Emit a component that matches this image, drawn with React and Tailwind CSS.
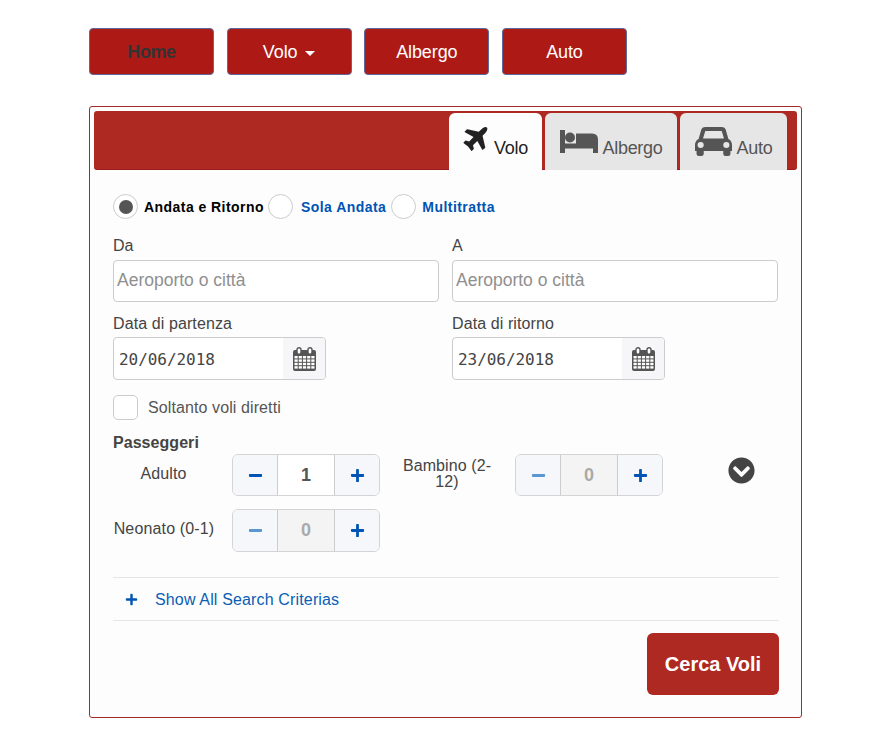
import React from "react";
import { FaChevronCircleDown, FaPlus, FaMinus } from "react-icons/fa";

function PlaneIcon() {
  return (
    <svg width="25" height="26" viewBox="0 130 1408 1530" className="mr-[6px] mb-[5px] text-[#222222]" fill="currentColor">
      <path d="M1376 160q44 52 12 148t-108 172l-161 161 160 696q5 19-12 33l-128 96q-7 6-19 6-4 0-7-1-15-3-21-16l-279-508-259 259 53 194q5 17-8 31l-96 96q-9 9-23 9h-2q-15-2-24-13l-189-252-252-189q-11-7-13-23-1-13 9-25l96-97q9-9 23-9 6 0 8 1l194 53 259-259-508-279q-14-8-17-24-2-16 9-27l128-128q14-13 30-8l665 159 160-160q76-76 172-108t148 12z" />
    </svg>
  );
}

function BedIcon() {
  return (
    <svg width="38" height="23" viewBox="0 0 38 23" className="mr-[5px] mb-[5px] text-[#555555]" fill="currentColor">
      <rect x="0" y="0" width="5" height="23" />
      <rect x="0" y="13.5" width="38" height="5" />
      <circle cx="10" cy="7.5" r="5" />
      <path d="M16 3.5H32q6 0 6 6V14H16z" />
      <rect x="33" y="14" width="5" height="9" />
    </svg>
  );
}

function CarIcon() {
  return (
    <svg width="37" height="29" viewBox="0 0 36 29" preserveAspectRatio="none" className="mr-[5px] mb-[2px] text-[#555555]" fill="currentColor">
      <path d="M10 0h16c2 0 3.5 1 4 3l2.5 9C35 13 36 16 36 18v6h-1.5v2.5a2.5 2.5 0 0 1-2.5 2.5h-2a2.5 2.5 0 0 1-2.5-2.5V24H8.5v2.5A2.5 2.5 0 0 1 6 29H4a2.5 2.5 0 0 1-2.5-2.5V24H0v-6c0-2 1-5 3.5-6L6 3c.5-2 2-3 4-3z" />
      <path d="M10 4h16l2.2 7.5H7.8z" fill="#e6e6e6" />
      <circle cx="5.5" cy="18" r="3" fill="#e6e6e6" />
      <circle cx="30.5" cy="18" r="3" fill="#e6e6e6" />
    </svg>
  );
}

function CalendarIcon() {
  const cols = [0, 1, 2, 3, 4];
  const rows = [0, 1, 2, 3];
  return (
    <svg width="23" height="24" viewBox="0 0 23 24">
      <rect x="0" y="3" width="23" height="21" rx="2" fill="#555555" />
      {rows.map((r) =>
        cols.map((c) => (
          <rect key={`${r}-${c}`} x={1.5 + c * 4.2} y={9 + r * 3.4} width="3.2" height="2.4" fill="#ffffff" />
        ))
      )}
      <rect x="4" y="0.7" width="4" height="6.6" rx="2" fill="#ffffff" stroke="#555555" strokeWidth="1.4" />
      <rect x="15" y="0.7" width="4" height="6.6" rx="2" fill="#ffffff" stroke="#555555" strokeWidth="1.4" />
    </svg>
  );
}

function NavBtn({ children, dark }) {
  return (
    <div className={`w-[125px] h-[47px] pt-[1px] flex items-center justify-center rounded-[4px] border border-[#5b6a9a] bg-[#ad1a16] text-[18px] tracking-[-0.1px] ${dark ? "text-[#333333]" : "text-white"}`}>
      {children}
    </div>
  );
}

function Tab({ w, active, icon, label, ml }) {
  return (
    <div className={`${w} ${ml} h-[57px] mt-[2px] rounded-t-[6px] flex items-end justify-center pb-[12px] text-[18px] leading-[20px] tracking-[-0.3px] ${active ? "bg-[#fdfdfd] text-[#222222]" : "bg-[#e6e6e6] text-[#555555]"}`}>
      {icon}
      <span>{label}</span>
    </div>
  );
}

function Radio({ checked }) {
  return (
    <span className="w-[25px] h-[25px] shrink-0 rounded-full border border-[#cccccc] bg-white flex items-center justify-center">
      {checked && <span className="w-[14px] h-[14px] rounded-full bg-[#555555]" />}
    </span>
  );
}

function TextField({ label }) {
  return (
    <div className="w-[326px]">
      <div className="text-[16px] leading-[22px] h-[26px] pt-[1px] text-[#444444]">{label}</div>
      <div className="h-[42px] rounded-[4px] border border-[#cccccc] bg-white flex items-center pl-[3px] pb-[2px] text-[17.5px] text-[#8f8f8f]">Aeroporto o città</div>
    </div>
  );
}

function DateField({ label, value }) {
  return (
    <div className="w-[326px]">
      <div className="text-[16px] leading-[22px] h-[24px] tracking-[0.1px] text-[#444444]">{label}</div>
      <div className="w-[213px] h-[43px] rounded-[4px] border border-[#cccccc] bg-white flex overflow-hidden">
        <div className="flex-1 flex items-center pl-[5px] pt-[2px] text-[16px] text-[#444444] font-['DejaVu_Sans_Mono',monospace] tracking-[-0.05px]">{value}</div>
        <div className="w-[42px] bg-[#f6f6f9] flex items-center justify-center">
          <CalendarIcon />
        </div>
      </div>
    </div>
  );
}

function Stepper({ value, disabled, h }) {
  return (
    <div className={`w-[148px] ${h} rounded-[6px] border border-[#d4d4d4] flex overflow-hidden shrink-0`}>
      <div className="w-[44px] bg-[#f6f7fb] flex items-center justify-center">
        <FaMinus size={15} className={disabled ? "text-[#5a96d2]" : "text-[#0054b4]"} />
      </div>
      <div className={`w-[58px] border-x border-[#cccccc] flex items-center justify-center text-[18px] font-bold ${disabled ? "bg-[#f4f4f4] text-[#aaaaaa]" : "bg-white text-[#555555]"}`}>{value}</div>
      <div className="flex-1 bg-[#f6f7fb] flex items-center justify-center">
        <FaPlus size={15} className="text-[#0054b4]" />
      </div>
    </div>
  );
}

export default function App() {
  return (
    <div className="w-[880px] h-[750px] bg-white pl-[89px] pt-[28px] font-['Liberation_Sans',Arial,sans-serif]">
      <div className="flex gap-[12.67px]">
        <NavBtn dark><span className="font-bold tracking-[-0.4px]">Home</span></NavBtn>
        <NavBtn>
          <span>Volo</span>
          <span className="ml-[8px] mt-[2px] w-0 h-0 border-x-[5px] border-x-transparent border-t-[5px] border-t-white" />
        </NavBtn>
        <NavBtn>Albergo</NavBtn>
        <NavBtn>Auto</NavBtn>
      </div>

      <div className="mt-[31px] w-[713px] h-[612px] rounded-[3px] border border-[#a3292a] bg-[#fdfdfd] p-[4px]">
        <div className="h-[59px] rounded-[3px] bg-[#af2923] border-b border-[#9c1a1c] flex">
          <div className="w-[355px]" />
          <Tab w="w-[93px]" active label="Volo" icon={<PlaneIcon />} />
          <Tab w="w-[132px]" ml="ml-[3px]" label="Albergo" icon={<BedIcon />} />
          <Tab w="w-[107px]" ml="ml-[3px]" label="Auto" icon={<CarIcon />} />
        </div>

        <div className="pl-[19px] pr-[18px]">
          <div className="mt-[24px] h-[25px] flex items-center text-[14px] font-bold tracking-[0.45px]">
            <Radio checked />
            <span className="ml-[6px] pt-[2px] text-black">Andata e Ritorno</span>
            <span className="ml-[4px]"><Radio /></span>
            <span className="ml-[8px] pt-[2px] text-[#0054b4]">Sola Andata</span>
            <span className="ml-[5px]"><Radio /></span>
            <span className="ml-[6px] pt-[2px] text-[#0054b4]">Multitratta</span>
          </div>

          <div className="mt-[15px] flex gap-[13px]">
            <TextField label="Da" />
            <TextField label="A" />
          </div>

          <div className="mt-[11px] flex gap-[13px]">
            <DateField label="Data di partenza" value="20/06/2018" />
            <DateField label="Data di ritorno" value="23/06/2018" />
          </div>

          <div className="mt-[15px] h-[25px] flex items-center">
            <span className="w-[25px] h-[25px] rounded-[5px] border border-[#cccccc] bg-white" />
            <span className="ml-[10px] text-[16px] tracking-[0.1px] text-[#555555]">Soltanto voli diretti</span>
          </div>

          <div className="mt-[13px] text-[16px] leading-[20px] font-bold tracking-[0.05px] text-[#444444]">Passeggeri</div>

          <div className="mt-[1px] flex items-start">
            <div className="w-[119px] pt-[10px] text-center text-[16px] leading-[20px] tracking-[0.1px] text-[#444444] pr-[18px] whitespace-nowrap">Adulto</div>
            <Stepper value="1" h="h-[42px]" />
            <div className="w-[135px] pl-[20px] pr-[21px] pt-[4px] text-center text-[16px] leading-[16px] tracking-[0.1px] text-[#444444]">Bambino (2-12)</div>
            <Stepper value="0" disabled h="h-[42px]" />
            <FaChevronCircleDown size={27} className="ml-[65px] mt-[3px] text-[#444444]" />
          </div>

          <div className="mt-[13px] flex items-start">
            <div className="w-[119px] pt-[10px] text-center text-[16px] leading-[20px] tracking-[0.15px] text-[#444444] pr-[17px] whitespace-nowrap">Neonato (0-1)</div>
            <Stepper value="0" disabled h="h-[43px]" />
          </div>

          <div className="mt-[25px] h-[44px] border-y border-[#e6e6e6] flex items-center pl-[12px]">
            <FaPlus size={13} className="text-[#0054b4]" />
            <span className="ml-[17px] pt-[1px] text-[16px] tracking-[0.15px] text-[#0a5eb4]">Show All Search Criterias</span>
          </div>

          <div className="mt-[12px] flex justify-end">
            <div className="w-[132px] h-[62px] pb-[1px] rounded-[6px] bg-[#af2923] flex items-center justify-center text-[20px] font-bold text-white">Cerca Voli</div>
          </div>
        </div>
      </div>
    </div>
  );
}
